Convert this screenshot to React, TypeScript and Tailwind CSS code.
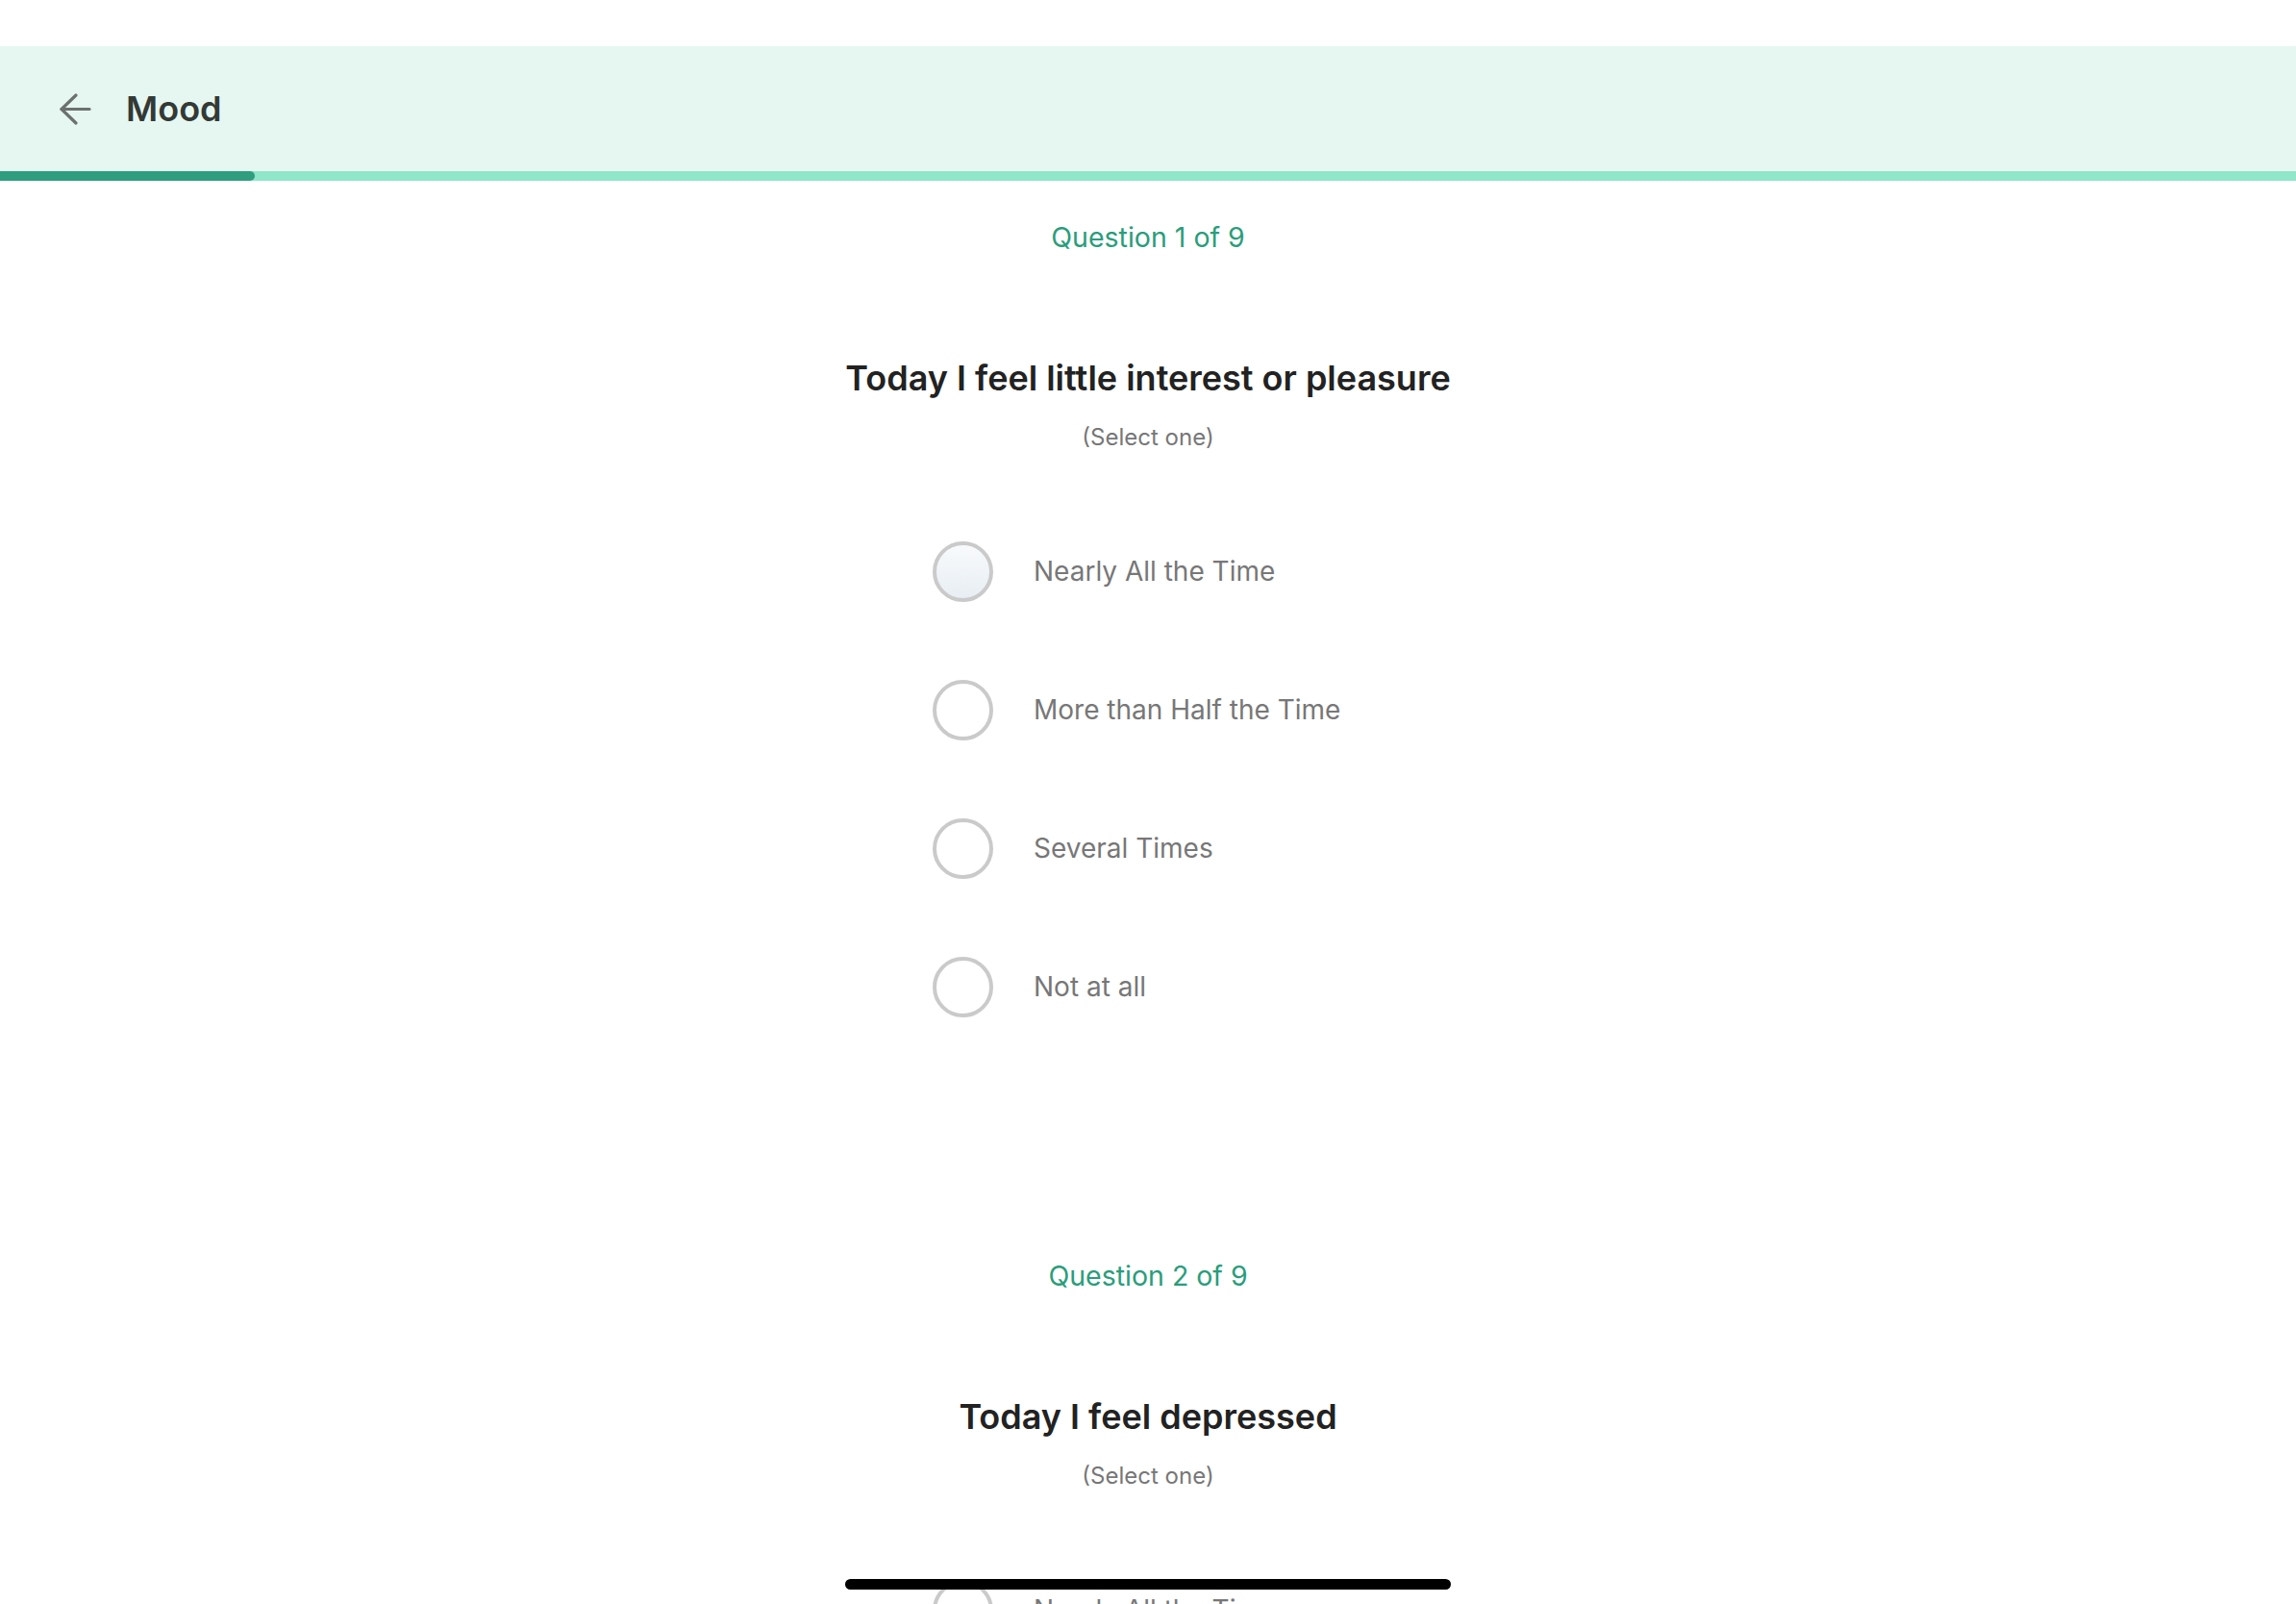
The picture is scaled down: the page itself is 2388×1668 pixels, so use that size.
import React, { useState } from 'react';

const options = ['Nearly All the Time', 'More than Half the Time', 'Several Times', 'Not at all'];

const questions = [
  'Today I feel little interest or pleasure',
  'Today I feel depressed',
];

interface QuestionProps {
  index: number;
  title: string;
  selected: number | null;
  highlight: boolean;
  onSelect: (i: number) => void;
}

const Question: React.FC<QuestionProps> = ({ index, title, selected, highlight, onSelect }) => (
  <section className="flex flex-col items-center pt-[41px] pb-[170px]">
    <p className="text-[28.5px] leading-[36px] text-[#2a9d7b]">Question {index + 1} of 9</p>
    <h2 className="mt-[106px] text-[36px] leading-[44px] font-semibold text-[#222222]">{title}</h2>
    <p className="mt-[24px] text-[24px] leading-[32px] text-[#777777]">(Select one)</p>

    <div className="mt-[51px] w-[448px] flex flex-col">
      {options.map((opt, i) => (
        <button
          key={opt}
          type="button"
          onClick={() => onSelect(i)}
          className="h-[144px] flex items-center text-left"
        >
          <span
            className={
              'w-[63px] h-[63px] rounded-full border-[4px] border-[#cacaca] shrink-0 ' +
              (highlight && i === 0 ? 'bg-gradient-to-b from-[#f8fafc] to-[#e8eef3]' : 'bg-white')
            }
          >
            {selected === i && <span className="block m-[10px] w-[35px] h-[35px] rounded-full bg-[#2e9e7e]" />}
          </span>
          <span className="ml-[42px] text-[28px] leading-[36px] text-[#777777]">{opt}</span>
        </button>
      ))}
    </div>
  </section>
);

const App: React.FC = () => {
  const [answers, setAnswers] = useState<(number | null)[]>([null, null]);

  return (
    <div className="w-[2388px] h-[1668px] bg-white overflow-hidden relative" style={{ fontFamily: 'Inter, "Noto Sans", sans-serif' }}>
      <div className="h-[48px] bg-white" />
      <header className="h-[130px] bg-[#e6f7f1] flex items-center pl-[62px]">
        <svg width="33" height="33" viewBox="0 0 33 33" fill="none" stroke="#6b716e" strokeWidth="3.2" strokeLinecap="round" strokeLinejoin="round">
          <path d="M31 16.5H2" />
          <path d="M17 2L2 16.5L17 31" />
        </svg>
        <h1 className="ml-[36px] text-[36px] font-semibold text-[#333936]">Mood</h1>
      </header>
      <div className="h-[10px] bg-[#8fe6c8]">
        <div className="h-full w-[265px] bg-[#2e9e7e] rounded-r-full" />
      </div>

      {questions.map((q, qi) => (
        <Question
          key={q}
          index={qi}
          title={q}
          selected={answers[qi]}
          highlight={qi === 0}
          onSelect={i => setAnswers(prev => prev.map((a, j) => (j === qi ? i : a)))}
        />
      ))}

      {/* home indicator */}
      <div className="absolute left-[879px] top-[1642px] w-[630px] h-[11px] rounded-full bg-black" />
    </div>
  );
};

export default App;
